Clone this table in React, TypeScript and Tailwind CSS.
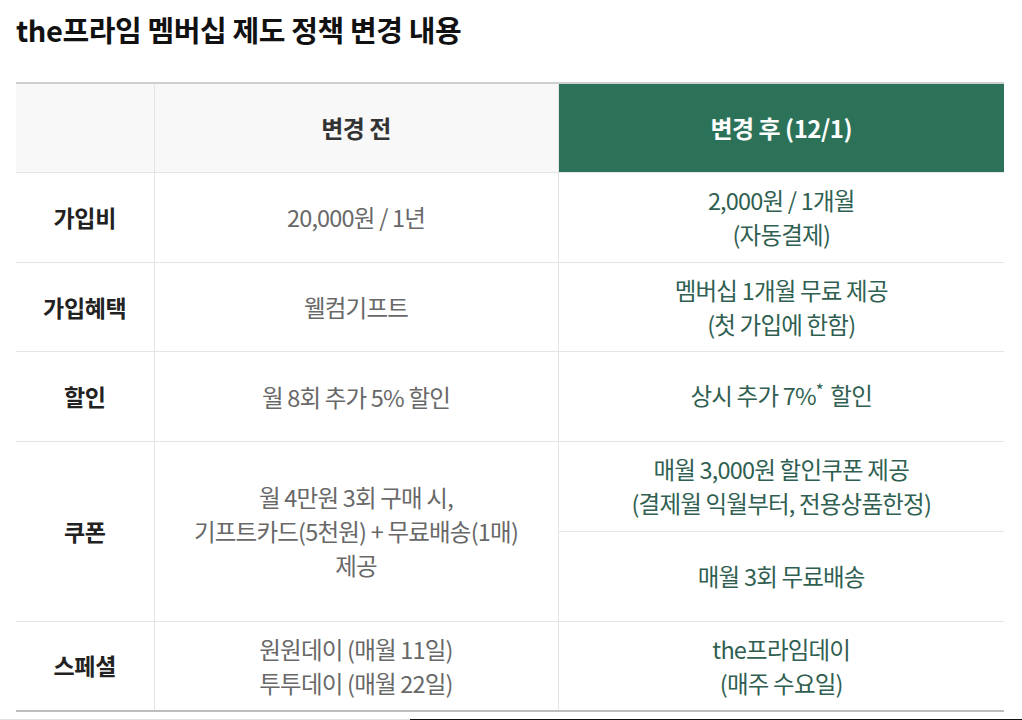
const font = { fontFamily: '"Noto Sans CJK KR", "Noto Sans", sans-serif' };

type Row = {
  label: string;
  before: string[];
  after: string[][];
};

const rows: Row[] = [
  { label: "가입비", before: ["20,000원 / 1년"], after: [["2,000원 / 1개월", "(자동결제)"]] },
  { label: "가입혜택", before: ["웰컴기프트"], after: [["멤버십 1개월 무료 제공", "(첫 가입에 한함)"]] },
  { label: "할인", before: ["월 8회 추가 5% 할인"], after: [["상시 추가 7%* 할인"]] },
  {
    label: "쿠폰",
    before: ["월 4만원 3회 구매 시,", "기프트카드(5천원) + 무료배송(1매)", "제공"],
    after: [["매월 3,000원 할인쿠폰 제공", "(결제월 익월부터, 전용상품한정)"], ["매월 3회 무료배송"]],
  },
  { label: "스페셜", before: ["원원데이 (매월 11일)", "투투데이 (매월 22일)"], after: [["the프라임데이", "(매주 수요일)"]] },
];

function Lines({ lines }: { lines: string[] }) {
  return (
    <>
      {lines.map((l, i) => {
        if (l.includes("*")) {
          const [a, b] = l.split("*");
          return (
            <div key={i}>
              {a}
              <span className="text-[17px] relative -top-[8px] mr-[3px]">*</span>
              {b}
            </div>
          );
        }
        return <div key={i}>{l}</div>;
      })}
    </>
  );
}

export default function App() {
  let n = 0;
  return (
    <div className="w-[1022px] h-[720px] bg-white overflow-hidden" style={font}>
      <h1 className="pl-4 pt-[11px] h-[82px] text-[29px] leading-[36px] font-bold tracking-[-0.4px] text-[#111]">
        the프라임 멤버십 제도 정책 변경 내용
      </h1>

      <table className="ml-4 w-[988px] table-fixed border-collapse border-t-2 border-b-2 border-t-[#cfcfcf] border-b-[#bdbdbd]">
        <colgroup>
          <col className="w-[138px]" />
          <col className="w-[404px]" />
          <col className="w-[446px]" />
        </colgroup>
        <thead>
          <tr className="h-[89px]">
            <th className="bg-[#f8f8f8] border-r border-b border-[#e4e4e4]" />
            <th className="bg-[#f8f8f8] border-r border-b border-[#e4e4e4] text-[24px] font-bold text-[#333] tracking-[-0.5px]">
              변경 전
            </th>
            <th className="bg-[#2b7259] border-b border-[#e4e4e4] text-[24px] font-bold text-white tracking-[-0.5px]">
              변경 후 (12/1)
            </th>
          </tr>
        </thead>
        <tbody>
          {rows.map((r, ri) => {
            const last = ri === rows.length - 1;
            const span = r.after.length;
            return r.after.map((a, ai) => {
              const tall = n++ % 2 === 0;
              return (
                <tr key={`${ri}-${ai}`} className={tall ? "h-[90px]" : "h-[89.5px]"}>
                  {ai === 0 && (
                    <>
                      <td
                        rowSpan={span}
                        className={`text-center border-r border-[#e4e4e4] text-[23px] font-bold text-[#222] tracking-[-0.3px] ${last ? "" : "border-b"}`}
                      >
                        {r.label}
                      </td>
                      <td
                        rowSpan={span}
                        className={`text-center border-r border-[#e4e4e4] text-[23.5px] leading-[34px] text-[#686868] tracking-[-0.8px] ${last ? "" : "border-b"}`}
                      >
                        <Lines lines={r.before} />
                      </td>
                    </>
                  )}
                  <td
                    className={`text-center border-[#e4e4e4] text-[23.5px] leading-[34px] text-[#305f52] tracking-[-0.8px] ${last ? "" : "border-b"}`}
                  >
                    <Lines lines={a} />
                  </td>
                </tr>
              );
            });
          })}
        </tbody>
      </table>

      <div className="mt-[7px] flex h-[2px]">
        <div className="w-[410px] bg-[#e2e2e2]" />
        <div className="flex-1 bg-[#111]" />
      </div>
    </div>
  );
}
